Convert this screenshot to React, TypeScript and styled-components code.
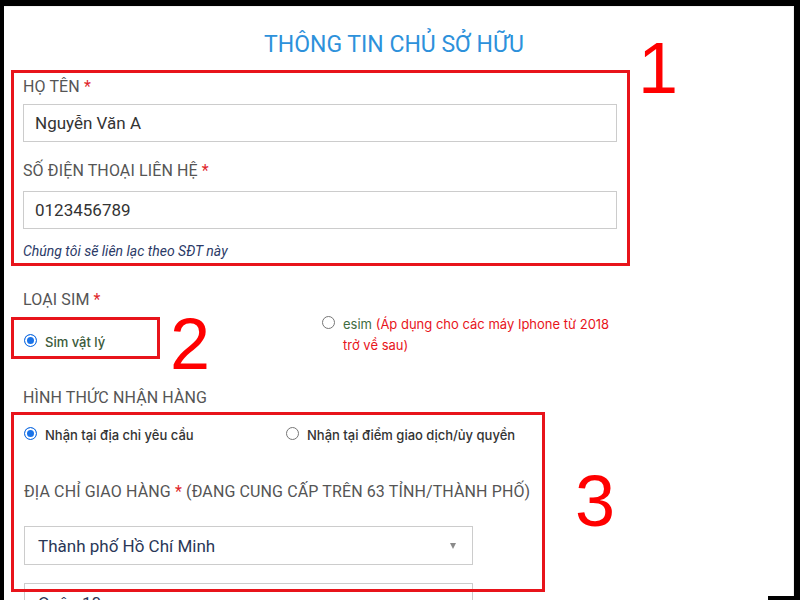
import React, { useState } from 'react'
import styled, { createGlobalStyle } from 'styled-components'

const GlobalStyle = createGlobalStyle`
  html, body {
    margin: 0;
    padding: 0;
    background: #000;
    overflow: hidden;
  }
  body {
    font-family: Roboto, "Liberation Sans", sans-serif;
  }
`

const MARK_RED = '#e8141b'

const Screen = styled.div`
  position: relative;
  width: 800px;
  height: 600px;
  overflow: hidden;
  background: #000;
`

const Sheet = styled.div`
  margin: 6px 0 0 4px;
  width: 790px;
  height: 700px;
  background: #fff;
  border-top: 1px solid #f2f2f2;
  border-right: 1px solid #eee;
  padding: 24px 0 0 7px;
  box-sizing: border-box;
`

const Corner = styled.div`
  position: absolute;
  right: 0;
  bottom: 0;
  width: 32px;
  height: 4px;
  background: #000;
`

const Title = styled.h1`
  margin: 0 0 12px;
  width: 766px;
  text-align: center;
  font-size: 23px;
  line-height: 27px;
  font-weight: 400;
  color: #2d91db;
`

const Mark = styled.div<{ $w?: number }>`
  position: relative;
  border: 3px solid ${MARK_RED};
  width: ${(p) => (p.$w ? `${p.$w}px` : 'auto')};
  box-sizing: border-box;
`

const Badge = styled.span<{ $x: number; $y: number }>`
  position: absolute;
  left: calc(100% + ${(p) => p.$x}px);
  top: ${(p) => p.$y}px;
  font-family: "Liberation Sans", Arial, sans-serif;
  font-size: 72px;
  line-height: 72px;
  color: #f00;
`

const OwnerBox = styled(Mark)`
  padding: 4px 10px 3px 9px;
`

const Label = styled.div<{ $gap?: number }>`
  font-size: 16px;
  line-height: 20px;
  letter-spacing: 0.12px;
  color: #555;
  margin-bottom: ${(p) => p.$gap ?? 10}px;
`

const Star = styled.span`
  color: #e0262b;
`

const Field = styled.div`
  & + & {
    margin-top: 19px;
  }
`

const Input = styled.input`
  display: block;
  width: 594px;
  height: 38px;
  box-sizing: border-box;
  border: 1px solid #ccc;
  padding: 0 11px;
  font-family: Roboto, "Liberation Sans", sans-serif;
  font-size: 17px;
  color: #333;
  outline: none;
`

const Hint = styled.div`
  margin-top: 13px;
  font-size: 14px;
  line-height: 18px;
  font-style: italic;
  color: #2b3a67;
`

const Section = styled.div<{ $top: number }>`
  margin-top: ${(p) => p.$top}px;
  padding-left: 12px;
`

const SimRow = styled.div`
  display: flex;
  align-items: flex-start;
  margin-top: 7px;
`

const SimBox = styled(Mark)`
  padding: 12px 0 3px 10px;
`

const Choice = styled.label<{ $tone?: string }>`
  display: flex;
  align-items: flex-start;
  gap: 8px;
  font-family: Inter, "Noto Sans", sans-serif;
  font-size: 13px;
  line-height: 21px;
  font-weight: 500;
  color: ${(p) => p.$tone ?? '#333'};
  cursor: pointer;
`

const Dot = styled.span<{ $on: boolean }>`
  flex: none;
  width: 13px;
  height: 13px;
  margin-top: 2px;
  border-radius: 50%;
  box-sizing: border-box;
  border: 1px solid ${(p) => (p.$on ? '#1a6fe0' : '#767676')};
  background: ${(p) => (p.$on ? '#1a73e8' : '#fff')};
  box-shadow: ${(p) => (p.$on ? 'inset 0 0 0 2px #fff' : 'none')};
`

const EsimWrap = styled.div`
  margin: -3px 0 0 162px;
  width: 300px;
`

const EsimText = styled.span`
  font-weight: 400;
`

const Green = styled.span`
  color: #3f6d3f;
`

const Note = styled.span`
  color: #e8141b;
`

const DeliveryWrap = styled.div`
  position: relative;
  margin-top: 4px;
  height: 240px;
  padding: 13px 0 0 13px;
  &::after {
    content: '';
    position: absolute;
    left: 0;
    top: 0;
    width: 534px;
    height: 180px;
    box-sizing: border-box;
    border: 3px solid ${MARK_RED};
    pointer-events: none;
  }
`

const DeliveryBadge = styled.span`
  position: absolute;
  left: 564px;
  top: 53px;
  font-family: "Liberation Sans", Arial, sans-serif;
  font-size: 72px;
  line-height: 72px;
  color: #f00;
`

const ChoiceRow = styled.div`
  display: grid;
  grid-template-columns: 262px auto;
  margin-bottom: 36px;
`

const Select = styled.div`
  display: flex;
  align-items: center;
  justify-content: space-between;
  width: 449px;
  height: 39px;
  box-sizing: border-box;
  border: 1px solid #ccc;
  background: #fff;
  padding: 0 16px 0 13px;
  font-size: 17px;
  color: #2a3757;
  & + & {
    margin-top: 18px;
  }
`

const Caret = styled.span`
  width: 0;
  height: 0;
  border-left: 3.5px solid transparent;
  border-right: 3.5px solid transparent;
  border-top: 6px solid #8a8a8a;
`

export default function App() {
  const [sim, setSim] = useState('physical')
  const [pickup, setPickup] = useState('address')

  return (
    <Screen>
      <GlobalStyle />
      <Sheet>
        <Title>THÔNG TIN CHỦ SỞ HỮU</Title>

        <OwnerBox $w={619}>
          <Field>
            <Label $gap={7}>
              HỌ TÊN <Star>*</Star>
            </Label>
            <Input defaultValue="Nguyễn Văn A" />
          </Field>
          <Field>
            <Label>
              SỐ ĐIỆN THOẠI LIÊN HỆ <Star>*</Star>
            </Label>
            <Input defaultValue="0123456789" />
          </Field>
          <Hint>Chúng tôi sẽ liên lạc theo SĐT này</Hint>
          <Badge $x={11} $y={-41}>1</Badge>
        </OwnerBox>

        <Section $top={24}>
          <Label $gap={0}>
            LOẠI SIM <Star>*</Star>
          </Label>
        </Section>
        <SimRow>
          <SimBox $w={149}>
            <Choice $tone="#3a5a3a" onClick={() => setSim('physical')}>
              <Dot $on={sim === 'physical'} />
              Sim vật lý
            </Choice>
            <Badge $x={13} $y={-12}>2</Badge>
          </SimBox>
          <EsimWrap>
            <Choice onClick={() => setSim('esim')}>
              <Dot $on={sim === 'esim'} />
              <EsimText>
                <Green>esim</Green> <Note>(Áp dụng cho các máy Iphone từ 2018 trở về sau)</Note>
              </EsimText>
            </Choice>
          </EsimWrap>
        </SimRow>

        <Section $top={29}>
          <Label $gap={0}>HÌNH THỨC NHẬN HÀNG</Label>
        </Section>
        <DeliveryWrap>
          <ChoiceRow>
            <Choice onClick={() => setPickup('address')}>
              <Dot $on={pickup === 'address'} />
              Nhận tại địa chỉ yêu cầu
            </Choice>
            <Choice onClick={() => setPickup('store')}>
              <Dot $on={pickup === 'store'} />
              Nhận tại điểm giao dịch/ủy quyền
            </Choice>
          </ChoiceRow>
          <Label $gap={24}>
            ĐỊA CHỈ GIAO HÀNG <Star>*</Star> (ĐANG CUNG CẤP TRÊN 63 TỈNH/THÀNH PHỐ)
          </Label>
          <Select>
            Thành phố Hồ Chí Minh
            <Caret />
          </Select>
          <Select>
            Quận 10
            <Caret />
          </Select>
          <DeliveryBadge>3</DeliveryBadge>
        </DeliveryWrap>
      </Sheet>
      <Corner />
    </Screen>
  )
}
